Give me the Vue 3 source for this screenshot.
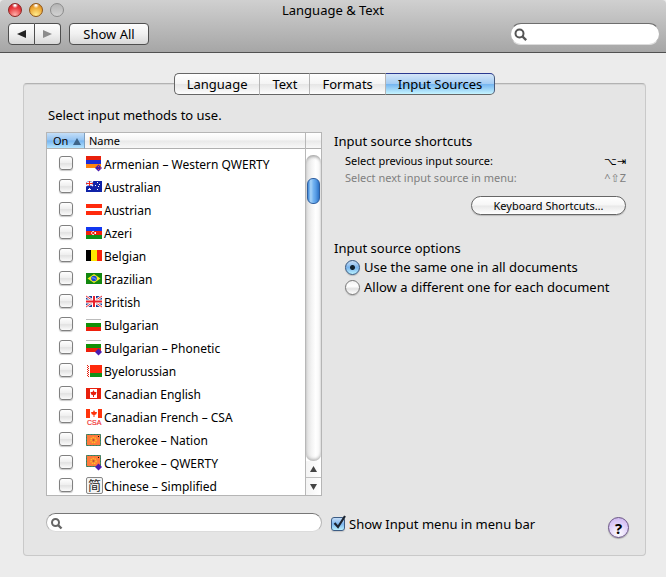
<script setup>
import { ref } from 'vue'

const tabs = ['Language', 'Text', 'Formats', 'Input Sources']
const activeTab = ref('Input Sources')
const documentMode = ref('same')
const showMenu = ref(true)

const sources = ref([
  { name: 'Armenian – Western QWERTY', flag: 'armenia', badge: 'check' },
  { name: 'Australian', flag: 'australia' },
  { name: 'Austrian', flag: 'austria' },
  { name: 'Azeri', flag: 'azeri' },
  { name: 'Belgian', flag: 'belgium' },
  { name: 'Brazilian', flag: 'brazil' },
  { name: 'British', flag: 'britain' },
  { name: 'Bulgarian', flag: 'bulgaria' },
  { name: 'Bulgarian – Phonetic', flag: 'bulgaria', badge: 'plain' },
  { name: 'Byelorussian', flag: 'belarus' },
  { name: 'Canadian English', flag: 'canada' },
  { name: 'Canadian French – CSA', flag: 'csa' },
  { name: 'Cherokee – Nation', flag: 'cherokee' },
  { name: 'Cherokee – QWERTY', flag: 'cherokee', badge: 'plain' },
  { name: 'Chinese – Simplified', flag: 'hans' }
].map((s) => ({ ...s, on: false })))
</script>

<template>
  <div class="window">
    <header class="titlebar">
      <div class="title-row">
        <div class="lights">
          <button class="light red" aria-label="Close"></button>
          <button class="light amber" aria-label="Minimize"></button>
          <button class="light off" aria-label="Zoom" disabled></button>
        </div>
        <h1>Language &amp; Text</h1>
      </div>
      <div class="toolbar">
        <div class="nav">
          <button aria-label="Back"><svg width="9" height="8" viewBox="0 0 9 8"><path d="M0 4 9 0V8z" fill="#222" /></svg></button>
          <button aria-label="Forward"><svg width="9" height="8" viewBox="0 0 9 8"><path d="M9 4 0 0V8z" fill="#8c8c8c" /></svg></button>
        </div>
        <button class="show-all">Show All</button>
        <div class="search top-search">
          <svg width="14" height="14" viewBox="0 0 14 14"><circle cx="5.5" cy="5.5" r="4" fill="none" stroke="#555" stroke-width="2" /><path d="M8.5 8.5 12.2 12.2" stroke="#555" stroke-width="2.4" /></svg>
          <input type="search" aria-label="Search preferences" />
        </div>
      </div>
    </header>

    <main class="panel">
      <nav class="tabs">
        <button v-for="t in tabs" :key="t" :class="{ active: t === activeTab }" @click="activeTab = t">{{ t }}</button>
      </nav>

      <p class="intro">Select input methods to use.</p>

      <div class="columns">
        <div class="list">
          <div class="table-area">
            <table>
              <thead>
                <tr>
                  <th class="on-col"><span>On</span><svg width="8" height="7" viewBox="0 0 8 7"><path d="M4 0 8 7H0z" fill="#3d6488" /></svg></th>
                  <th>Name</th>
                </tr>
              </thead>
              <tbody>
                <tr v-for="(s, i) in sources" :key="s.name">
                  <td><input :id="'src' + i" v-model="s.on" type="checkbox" class="check" /></td>
                  <td>
                    <label :for="'src' + i" class="source">
                      <svg class="flag" width="18" height="18" viewBox="0 0 18 18">
                        <g :transform="s.badge || s.flag === 'csa' ? 'translate(0 1)' : 'translate(0 3)'">
                          <g v-if="s.flag === 'armenia'">
                            <path d="M0 0H15V4H0z" fill="#e8200c" /><path d="M0 4H15V8H0z" fill="#1c2cd8" /><path d="M0 8H15V12H0z" fill="#ff8410" />
                          </g>
                          <g v-else-if="s.flag === 'australia'">
                            <path d="M0 0H16V11H0z" fill="#1023a8" />
                            <path d="M0 0 7 5M7 0 0 5" stroke="#fff" stroke-width="1.4" />
                            <path d="M3.5 0V5M0 2.5H7" stroke="#fff" stroke-width="2" />
                            <path d="M3.5 0V5M0 2.5H7" stroke="#f02a1c" stroke-width="1" />
                            <path d="M3 7h1v1h-1zM2 8h3v1H2zM11 1h1v1h-1zM9 4h1v1H9zM13 3h1v1h-1zM11 8h1v1h-1zM12 5h1v1h-1z" fill="#fff" />
                          </g>
                          <g v-else-if="s.flag === 'austria'">
                            <path d="M0 0H16V11H0z" fill="#ff2a0c" /><path d="M0 4H16V7H0z" fill="#fff" />
                          </g>
                          <g v-else-if="s.flag === 'azeri'">
                            <path d="M0 0H16V4H0z" fill="#1237f0" /><path d="M0 4H16V8H0z" fill="#f0200c" /><path d="M0 8H16V12H0z" fill="#109018" />
                            <path d="M8 4.6A1.6 1.6 0 1 0 8 7.4" fill="none" stroke="#fff" /><path d="M8.5 5h1.5v2H8.5z" fill="#fff" />
                          </g>
                          <g v-else-if="s.flag === 'belgium'">
                            <path d="M0 0H5V11H0z" fill="#000" /><path d="M5 0H11V11H5z" fill="#ffe800" /><path d="M11 0H16V11H11z" fill="#f8240c" />
                          </g>
                          <g v-else-if="s.flag === 'brazil'">
                            <path d="M0 0H16V11H0z" fill="#12870f" /><path d="M8 1 14.5 5.5 8 10 1.5 5.5z" fill="#f4ee20" /><circle cx="8" cy="5.5" r="2.8" fill="#1746d8" /><path d="M6 4.8Q8.5 4.6 10 6.4" fill="none" stroke="#9cc4ff" stroke-width=".8" />
                          </g>
                          <g v-else-if="s.flag === 'britain'">
                            <path d="M0 0H16V11H0z" fill="#1d3f96" />
                            <path d="M0 0 16 11M16 0 0 11" stroke="#fff" stroke-width="2.6" />
                            <path d="M0 0 16 11M16 0 0 11" stroke="#e83038" stroke-width="1" />
                            <path d="M8 0V11M0 5.5H16" stroke="#fff" stroke-width="4" />
                            <path d="M8 0V11M0 5.5H16" stroke="#e8202c" stroke-width="2" />
                          </g>
                          <g v-else-if="s.flag === 'bulgaria'">
                            <path d="M0 0H15V4H0z" fill="#fff" /><path d="M0 .5H15" stroke="#bbb" /><path d="M0 4H15V8H0z" fill="#119008" /><path d="M0 8H15V12H0z" fill="#ee200c" />
                          </g>
                          <g v-else-if="s.flag === 'belarus'">
                            <path d="M4 0H16V8H4z" fill="#ff2a0c" /><path d="M4 8H16V12H4z" fill="#119018" />
                            <path d="M1.5 0V12" stroke="#e8200c" stroke-dasharray="1 1" /><path d="M2.5 1V12" stroke="#e8200c" stroke-dasharray="1 1" />
                          </g>
                          <g v-else-if="s.flag === 'canada'">
                            <path d="M.5 .5H14.5V10.5H.5z" fill="#fff" stroke="#e8200c" /><path d="M0 0H4V11H0zM11 0H15V11H11z" fill="#e8200c" />
                            <path d="M7.5 2 8.5 4 10.5 4 9.8 6.5 8 7.2V9H7V7.2L5.2 6.5 4.5 4 6.5 4z" fill="#e8200c" />
                          </g>
                          <g v-else-if="s.flag === 'csa'">
                            <path d="M0 0H16V9H0z" fill="#fff" /><path d="M0 0H4V9H0zM12 0H16V9H12z" fill="#ff340c" />
                            <path d="M8 1 9 3 11 3 10.3 5.3 8.5 6V8H7.5V6L5.7 5.3 5 3 7 3z" fill="#ff340c" />
                            <text x="1" y="16" class="csa-text">CSA</text>
                          </g>
                          <g v-else-if="s.flag === 'cherokee'">
                            <path d="M.5 .5H14.5V11.5H.5z" fill="#ff7a3c" stroke="#25806c" />
                            <path d="M.5 .5H14.5V11.5H.5z" fill="none" stroke="#8a8050" stroke-dasharray="1 2" />
                            <circle cx="7.5" cy="6" r="2.6" fill="none" stroke="#f6d820" stroke-width="1.2" stroke-dasharray="1.2 1" /><circle cx="7.5" cy="6" r="1" fill="#a86030" /><path d="M12 2h1v1h-1z" fill="#000" />
                          </g>
                          <g v-else>
                            <rect x=".5" y="-2.5" width="16" height="16" rx="1.5" fill="#f4f4f4" stroke="#888" />
                            <text x="2" y="10" class="hans-text">简</text>
                          </g>
                        </g>
                        <g v-if="s.badge">
                          <path d="M12.5 9.5 16 13 12.5 16.5 9 13z" fill="#4a1cb0" />
                          <path v-if="s.badge === 'check'" d="M12 11h1v1h-1zM14 12.5h1v1h-1zM12 14h1v1h-1z" fill="#f04848" />
                        </g>
                      </svg>
                      <span>{{ s.name }}</span>
                    </label>
                  </td>
                </tr>
              </tbody>
            </table>
          </div>
          <div class="scroll">
            <div class="corner"></div>
            <div class="track"><div class="thumb"></div></div>
            <button class="arrow" aria-label="Scroll up"><svg width="7" height="6" viewBox="0 0 7 6"><path d="M3.5 0 7 6H0z" fill="#444" /></svg></button>
            <button class="arrow" aria-label="Scroll down"><svg width="7" height="6" viewBox="0 0 7 6"><path d="M3.5 6 7 0H0z" fill="#444" /></svg></button>
          </div>
        </div>

        <div class="settings">
          <h2>Input source shortcuts</h2>
          <dl>
            <div><dt>Select previous input source:</dt><dd>⌥⇥</dd></div>
            <div class="dim"><dt>Select next input source in menu:</dt><dd>^⇧Z</dd></div>
          </dl>
          <button class="pill">Keyboard Shortcuts…</button>
          <h2>Input source options</h2>
          <label class="choice"><input v-model="documentMode" type="radio" name="mode" value="same" /><span>Use the same one in all documents</span></label>
          <label class="choice"><input v-model="documentMode" type="radio" name="mode" value="each" /><span>Allow a different one for each document</span></label>
        </div>
      </div>

      <div class="footer">
        <div class="search">
          <svg width="14" height="14" viewBox="0 0 14 14"><circle cx="5.5" cy="5.5" r="3.5" fill="none" stroke="#666" stroke-width="2" /><path d="M8 8 11.5 11.5" stroke="#666" stroke-width="2.4" /></svg>
          <input type="search" aria-label="Search input methods" />
        </div>
        <label class="menu-toggle">
          <span class="tick-box">
            <input v-model="showMenu" type="checkbox" class="check" />
            <svg v-if="showMenu" width="16" height="16" viewBox="0 0 16 16"><path d="M3.5 8 7 12 14 1" fill="none" stroke="#1c2430" stroke-width="2.2" /></svg>
          </span>
          <span>Show Input menu in menu bar</span>
        </label>
        <button class="help" aria-label="Help">?</button>
      </div>
    </main>
  </div>
</template>

<style>
body {
  background: #ececec;
}
</style>

<style scoped>
.window {
  font: 13px/20px "Noto Sans", "DejaVu Sans", "Noto Sans CJK SC", sans-serif;
  color: #000;
  padding-bottom: 22px;
}
button,
input {
  font: inherit;
  color: inherit;
  margin: 0;
  padding: 0;
  box-sizing: border-box;
}
h1,
h2,
p,
dl,
dd {
  margin: 0;
  font-size: 13px;
  font-weight: normal;
}
.titlebar {
  height: 52px;
  background: linear-gradient(#d0d0d0, #a6a6a6);
  border-bottom: 1px solid #515151;
  border-radius: 4px 4px 0 0;
}
.title-row {
  display: grid;
  grid-template-columns: 1fr auto 1fr;
  height: 23px;
}
.lights {
  display: flex;
  gap: 7px;
  padding: 3px 0 0 8px;
}
.light {
  width: 14px;
  height: 14px;
  border-radius: 50%;
  border: 1px solid #8b8b8b;
}
.red {
  border-color: #8c2522;
  background: radial-gradient(circle at 50% 10%, #fff 0 5%, transparent 25%), radial-gradient(circle at 50% 90%, #ffb0aa, #e8363a 60%, #c02028);
}
.amber {
  border-color: #8f5516;
  background: radial-gradient(circle at 50% 10%, #fff 0 5%, transparent 25%), radial-gradient(circle at 50% 90%, #ffec8c, #eba32f 65%, #c06e18);
}
.off {
  background: linear-gradient(#b4b4b4, #d2d2d2);
}
.toolbar {
  display: flex;
  gap: 8px;
  padding: 0 6px 0 8px;
}
.nav {
  display: flex;
}
.nav button,
.show-all {
  height: 22px;
  border: 1px solid #4f4f4f;
  border-radius: 4px;
  background: linear-gradient(#fdfdfd, #f0f0f0 50%, #d8d8d8);
}
.nav button {
  display: grid;
  place-items: center;
  width: 27px;
}
.nav button:first-child {
  border-radius: 4px 0 0 4px;
}
.nav button:last-child {
  border-radius: 0 4px 4px 0;
  border-left: 0;
  width: 26px;
}
.show-all {
  width: 80px;
}
.search {
  position: relative;
}
.search svg {
  position: absolute;
  left: 4px;
  top: 5px;
}
.search input {
  display: block;
  appearance: none;
  width: 100%;
  height: 19px;
  border: 1px solid #b4b4b4;
  border-top-color: #777;
  border-bottom-color: #dcdcdc;
  border-radius: 10px;
  background: #fff;
  padding: 0 10px 0 20px;
  outline: none;
}
.top-search {
  width: 150px;
  margin-left: auto;
}
.top-search input {
  height: 22px;
  border-radius: 11px;
  border-top-color: #6e6e6e;
}
.panel {
  margin: 30px 20px 0 23px;
  border: 1px solid #c9c9c9;
  border-top-color: #b2b2b2;
  border-radius: 4px;
  background: #e5e5e5;
  box-shadow: inset 0 1px #d6d6d6;
  padding: 0 16px 17px;
}
.tabs {
  display: flex;
  width: max-content;
  margin: -11px auto 0;
}
.tabs button {
  height: 22px;
  line-height: 19px;
  padding: 0 12px;
  border: 1px solid #666;
  border-left: 0;
  border-right-color: #b5b5b5;
  background: linear-gradient(#fff, #f4f4f4 48%, #e6e6e6 52%, #fdfdfd);
}
.tabs button:first-child {
  border-left: 1px solid #666;
  border-radius: 5px 0 0 5px;
}
.tabs button:last-child {
  border-right: 1px solid #45597c;
  border-radius: 0 5px 5px 0;
}
.tabs .active {
  border-top-color: #2a3a90;
  background: linear-gradient(#d5e6f8, #a4cdf4 48%, #76b6f0 52%, #c6f4ff);
}
.intro {
  padding: 10px 8px 7px;
}
.columns {
  display: grid;
  grid-template-columns: 276fr 292fr;
  gap: 12px;
  padding: 0 3px 0 6px;
}
.list {
  display: flex;
  height: 364px;
  box-sizing: border-box;
  border: 1px solid #b5b5b5;
  background: #fff;
}
.table-area {
  flex: 1;
  overflow: hidden;
}
table {
  width: 100%;
  table-layout: fixed;
  border-collapse: separate;
  border-spacing: 0;
  font-size: 12px;
}
th {
  height: 15px;
  padding: 0 0 0 4px;
  font-size: 11px;
  line-height: 15px;
  font-weight: normal;
  text-align: left;
  border-bottom: 1px solid #b0b0b0;
  background: linear-gradient(#fff, #f4f4f4 48%, #e9e9e9 52%, #f8f8f8);
}
.on-col {
  width: 31px;
  padding-left: 6px;
  border-right: 1px solid #7d9fc0;
  background: linear-gradient(#c4def7, #93c3f2 48%, #77b5f0 52%, #b4e4ff);
}
.on-col svg {
  margin-left: 5px;
}
tbody::before {
  content: "";
  display: table-row;
  height: 4px;
}
td {
  height: 23px;
  padding: 0;
  vertical-align: top;
}
.check {
  display: block;
  appearance: none;
  width: 14px;
  height: 14px;
  border: 1px solid #808080;
  border-radius: 3px;
  background: linear-gradient(#fff, #eee 50%, #e2e2e2 55%, #fbfbfb);
  box-shadow: 0 1px 1px #c8c8c8;
}
td .check {
  margin: 3px 0 0 12px;
}
.source {
  display: flex;
  height: 23px;
  line-height: 23px;
  white-space: nowrap;
}
.flag {
  margin: 2px 0 0 1px;
  overflow: visible;
}
.csa-text {
  font: 7px "Liberation Sans", sans-serif;
  fill: #f03030;
  stroke: #f03030;
  stroke-width: 0.2px;
}
.hans-text {
  font: 13px "Noto Sans CJK SC", sans-serif;
  fill: #222;
}
.scroll {
  display: flex;
  flex-direction: column;
  width: 15px;
  border-left: 1px solid #b8b8b8;
}
.corner {
  height: 15px;
  border-bottom: 1px solid #b0b0b0;
  background: linear-gradient(#fff, #f4f4f4 48%, #e9e9e9 52%, #f8f8f8);
}
.track {
  flex: 1;
  margin-top: 6px;
  padding-top: 23px;
  border-radius: 7px;
  background: linear-gradient(90deg, #dcdcdc, #f2f2f2 35%, #fff 65%, #f2f2f2);
  box-shadow: inset 0 3px 3px -1px #aaa, inset 0 -3px 3px -1px #bbb;
}
.thumb {
  width: 13px;
  height: 26px;
  box-sizing: border-box;
  margin: 0 auto;
  border: 1px solid #2f5fa0;
  border-radius: 6px;
  background: linear-gradient(90deg, #3b86d8, #a9d4f8 25%, #72b2f0 50%, #5a9ee6 70%, #2e74c8);
}
.arrow {
  display: grid;
  place-items: center;
  height: 16px;
  border: 0;
  background: linear-gradient(90deg, #f4f4f4, #fff);
}
.arrow:last-child {
  height: 18px;
  border-top: 1px solid #c0c0c0;
}
.settings h2 {
  line-height: 18px;
}
.settings dl {
  padding: 2px 0 0 11px;
  font-size: 11px;
  line-height: 17px;
}
.settings dl div {
  display: flex;
  justify-content: space-between;
}
.settings dd {
  font-size: 11px;
}
.dim {
  color: #808080;
}
.pill {
  display: block;
  width: 155px;
  height: 19px;
  margin: 10px 0 24px auto;
  font-size: 11px;
  line-height: 16px;
  border: 1px solid #666;
  border-radius: 10px;
  background: linear-gradient(#fff, #f6f6f6 48%, #e8e8e8 52%, #fff);
  box-shadow: 0 1px 1px #bbb;
}
.choice {
  display: flex;
  align-items: center;
  gap: 4px;
  padding-left: 11px;
}
.choice input {
  appearance: none;
  width: 15px;
  height: 15px;
  border: 1px solid #777;
  border-radius: 50%;
  background: linear-gradient(#f2f2f2, #fff 40%, #e2e2e2 60%, #fff);
  box-shadow: 0 1px 1px #bbb;
}
.choice input:checked {
  border-color: #35567f;
  background: radial-gradient(circle, #10202e 0 2px, transparent 3px), linear-gradient(#c8def6, #7ab4ec 50%, #b8f0ff);
}
.footer {
  display: flex;
  align-items: flex-start;
  padding: 17px 0 0 6px;
}
.footer .search {
  flex: 0 1 276px;
}
.footer .search svg {
  top: 4px;
}
.menu-toggle {
  display: flex;
  align-items: center;
  gap: 4px;
  margin: 1px 0 0 9px;
}
.tick-box {
  position: relative;
}
.tick-box svg {
  position: absolute;
  left: 0;
  top: -2px;
}
.tick-box .check:checked {
  border-color: #3c5c84;
  background: linear-gradient(#c4dcf6, #7cb6ee 50%, #b8f0ff);
}
.help {
  width: 21px;
  height: 21px;
  margin: 4px 0 0 auto;
  border: 1px solid #6a5486;
  border-radius: 50%;
  background: radial-gradient(circle at 50% 80%, #fff, #dccbf8 60%, #c6aeea);
  font-size: 15px;
  font-weight: bold;
  line-height: 18px;
  box-shadow: 0 1px 1px #aaa;
}
</style>
